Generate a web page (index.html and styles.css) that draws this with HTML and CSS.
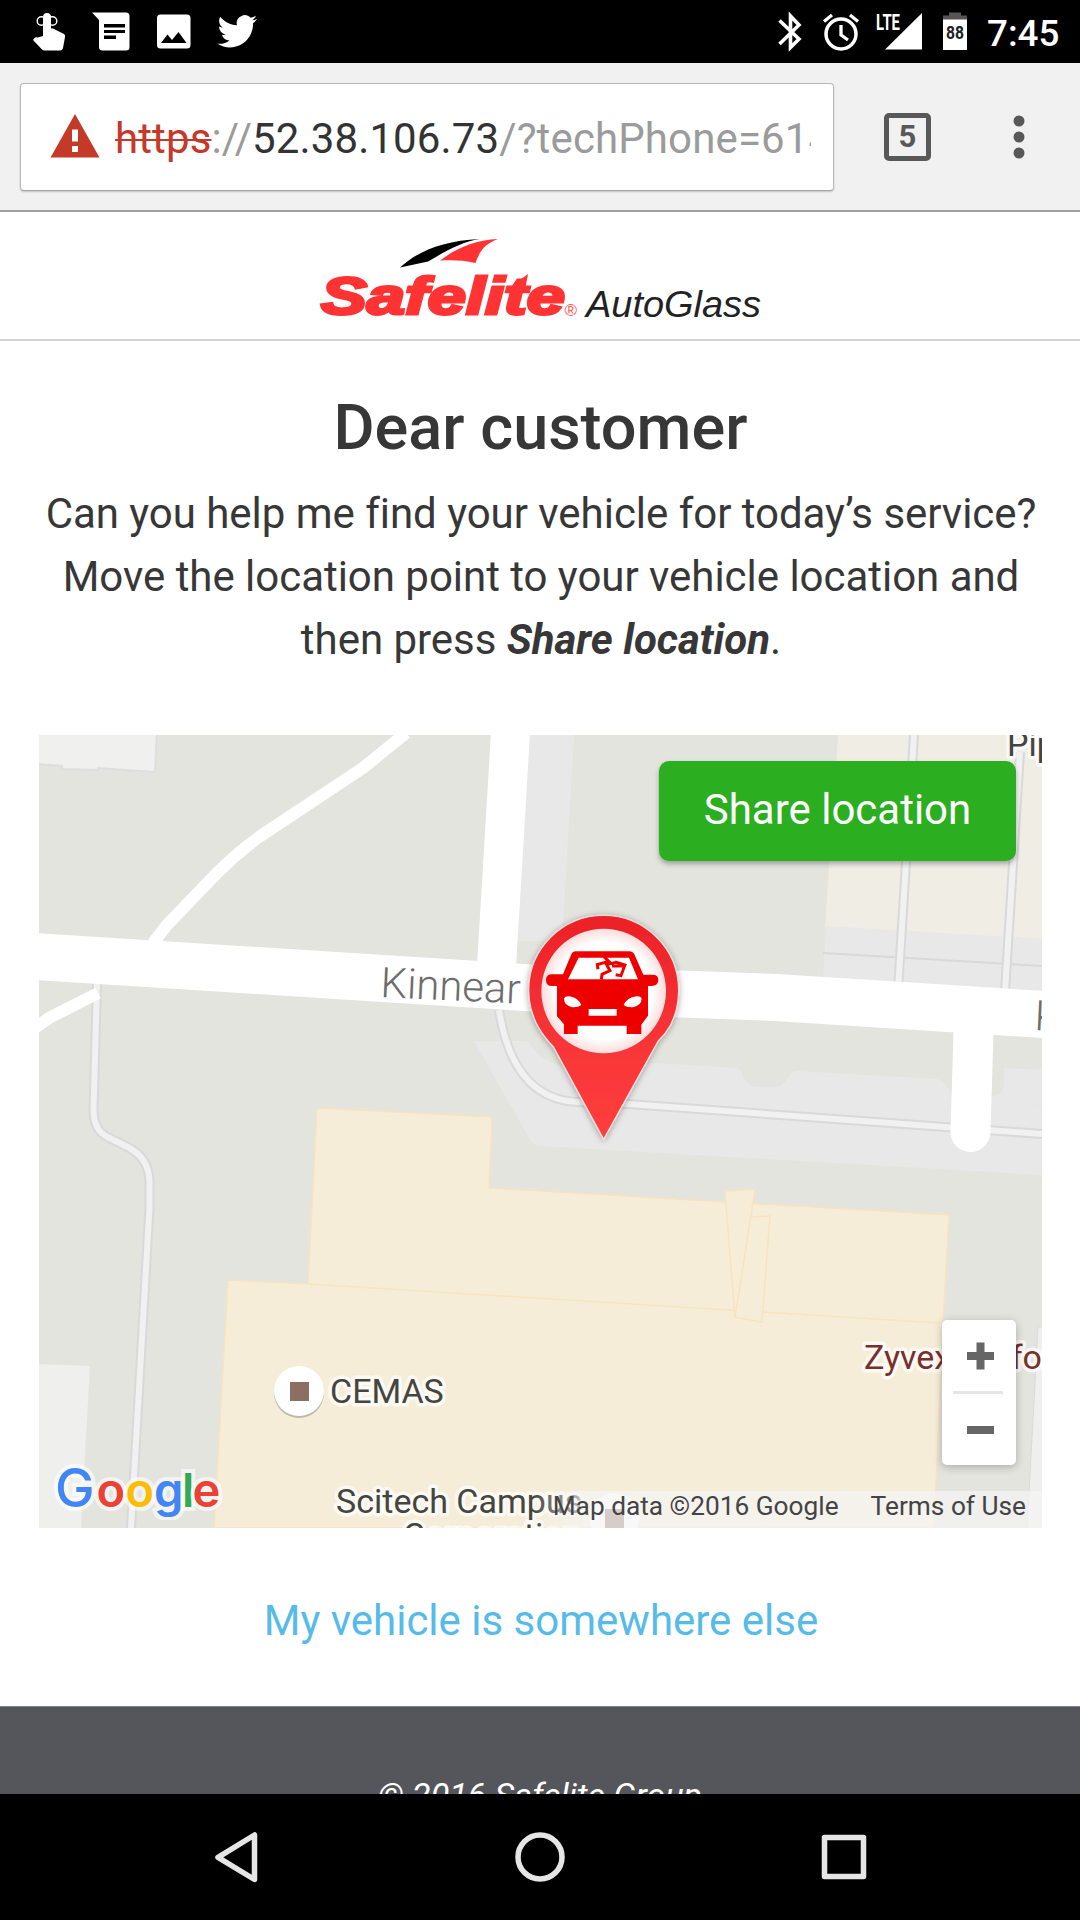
FILE: index.html
```html
<!DOCTYPE html>
<html lang="en">
<head>
<meta charset="utf-8">
<title>Safelite AutoGlass</title>
<link rel="stylesheet" href="styles.css">
</head>
<body>
<div class="phone">
  <div class="status-bar">
    <svg class="status-left" width="260" height="63" viewBox="0 0 260 63" fill="#fff">
      <path d="M43 36V17a4 4 0 0 1 8 0v11.500l2 0 11 5.500q1.500 1 1 3L63 48q-.5 2.500-3 2.500H44.500q-1.500 0-3-1.500L33 40l1.500-2q1-1 3-.5z"/>
      <circle cx="41.500" cy="21" r="4.300" fill="none" stroke="#fff" stroke-width="1.400"/>
      <circle cx="52.500" cy="21" r="4.300" fill="none" stroke="#fff" stroke-width="1.400"/>
      <path fill-rule="evenodd" d="M92 12.500h34q3.500 0 3.500 3.500v31q0 3.500-3.500 3.500h-23.500q-3.500 0-3.500-3.500V20zM104 24v3.500h21V24zm0 6v3h21v-3zm0 5.500v3.500h12v-3.500z"/>
      <path fill-rule="evenodd" d="M160.500 14.500h26.500q3.500 0 3.500 3.500v27q0 3.500-3.500 3.500h-26.500q-3.500 0-3.500-3.500V18q0-3.500 3.500-3.500zM161 43h25.500L178.500 32l-6.500 8-4.500-5.500z"/>
      <path transform="translate(217.500 11.500) scale(1.650)" d="M23.950 4.570a10 10 0 0 1-2.820.780 4.960 4.960 0 0 0 2.160-2.720c-.95.550-2 .950-3.130 1.180a4.920 4.920 0 0 0-8.380 4.480C7.690 8.100 4.070 6.130 1.640 3.160a4.820 4.820 0 0 0-.67 2.480c0 1.700.87 3.210 2.190 4.100a4.900 4.900 0 0 1-2.230-.62v.06a4.920 4.920 0 0 0 3.950 4.830 5 5 0 0 1-2.210.080 4.940 4.940 0 0 0 4.600 3.420A9.870 9.870 0 0 1 0 19.540a13.990 13.990 0 0 0 7.550 2.210c9.050 0 14-7.500 14-13.980 0-.21 0-.42-.02-.63a9.940 9.940 0 0 0 2.460-2.550z"/>
    </svg>
    <svg class="status-right" width="200" height="63" viewBox="775 0 200 63" fill="#fff">
      <path d="M779.500 20.500L799 39 790.500 47.500V16L799 25 779.500 44" fill="none" stroke="#fff" stroke-width="3.600"/>
      <circle cx="841" cy="34" r="15" fill="none" stroke="#fff" stroke-width="3.500"/>
      <path d="M841 25v10l7 5M824 21.500l8-6.500M858 21.500l-8-6.500" fill="none" stroke="#fff" stroke-width="3.300"/>
      <text class="lte" x="876" y="29.500" textLength="24" lengthAdjust="spacingAndGlyphs">LTE</text>
      <path d="M922 13v36.500H885z"/>
      <path fill="#555" d="M949 12.500h12v3h6V20h-24v-4.500h6z"/>
      <path d="M943 19.500h24V50h-24z"/>
      <text class="charge" x="946" y="38.500" textLength="18" lengthAdjust="spacingAndGlyphs">88</text>
    </svg>
    <span class="clock">7:45</span>
  </div>

  <div class="toolbar">
    <div class="omnibox">
      <svg width="50" height="44" viewBox="0 0 50 44"><path fill="#c53929" d="M25 0l24.500 43.500H.500z"/><path fill="#fff" d="M22 15.500h6v12h-6zM22 32h6v6h-6z"/></svg>
      <div class="url"><span class="scheme">https</span>://<span class="host">52.38.106.73</span>/?techPhone=614</div>
    </div>
    <div class="tabs">5</div>
    <svg class="menu" width="14" height="48" viewBox="0 0 14 48" fill="#585858"><circle cx="7" cy="8" r="5.500"/><circle cx="7" cy="24" r="5.500"/><circle cx="7" cy="40" r="5.500"/></svg>
  </div>

  <div class="page">
    <header class="brand">
      <svg width="450" height="100" viewBox="315 232 450 100">
        <path d="M400 267.500c16-15 42-27 80-28.500-19 3-34 12-52 22.500z"/>
        <path fill="#f33" d="M440 260.500c16-12 34-20.500 58-21.500-13 5-18 11-22.500 24-12-3-24-3-35.500-2.500z"/>
        <text class="wordmark" x="321" y="314" textLength="244" lengthAdjust="spacingAndGlyphs">Safelite</text>
        <path fill="#f33" d="M509 288l19-14-3 16z"/>
        <text class="reg" x="564.500" y="316">®</text>
        <text class="autoglass" x="586" y="317" textLength="175" lengthAdjust="spacingAndGlyphs">AutoGlass</text>
      </svg>
    </header>

    <main>
      <h1>Dear customer</h1>
      <p class="lead">Can you help me find your vehicle for today’s service?<br>Move the location point to your vehicle location and<br>then press <b><i>Share location</i></b>.</p>

      <div class="map">
        <svg class="tiles" width="1003" height="793" viewBox="39 735 1003 793">
          <defs>
            <linearGradient id="pin" x1="0" y1="0" x2="0" y2="1"><stop offset="0" stop-color="#eb2126"/><stop offset=".6" stop-color="#f83638"/><stop offset="1" stop-color="#ff3d3d"/></linearGradient>
            <radialGradient id="glow"><stop offset=".78" stop-color="#fff"/><stop offset="1" stop-color="#fcdcdc"/></radialGradient>
            <filter id="soft" x="-20%" y="-20%" width="140%" height="140%"><feDropShadow dx="0" dy="3" stdDeviation="9" flood-opacity=".35"/></filter>
          </defs>
          <rect x="39" y="735" width="1003" height="793" fill="#e3e4de"/>
          <!-- lots and blocks -->
          <path fill="#f0f0ef" stroke="#dedede" stroke-width="2" d="M36 733H157l-2 39-57-4v2l-36-1v-3l-26-2z"/>
          <path fill="#e8e8e9" d="M530 735h44l-12 206h-46z"/>
          <path fill="#efede4" d="M838 735h204v204l-217-12z"/>
          <path fill="#e8e8e8" d="M826 926l216 13v55l-219-14z"/>
          <path stroke="#d9d9d9" stroke-width="2" d="M823 953l219 13"/>
          <path fill="#e8e8e8" d="M474 1041h54q12 22 40 26l88-4 81 5q4 2 6 8 4 10 12 11h22q6-1 10-8 5-8 10-8l140 8q7 1 10 8 4 8 11 9h33q12 0 13-12v-16l38 2v35l-502 33z"/>
          <path fill="#e8e8e8" d="M474 1041l54 0q20 45 100 52l414 13v69l-502-29q-7-1-11-8z"/>
          <path fill="#efefee" d="M39 1364l51 2-9 162H39z"/>
          <path fill="#efefee" stroke="#dadada" d="M1038 1327h6v203h-17z"/>
          <!-- paths -->
          <g fill="none" stroke="#d9d9d9" stroke-width="10">
            <path d="M97 984L93.500 1110q0 20 14 27l22 11q20 11 20 35v25L131 1528"/>
            <path d="M499 1010q14 89 78 92l51 2 414 30"/>
            <path d="M914 735l-16 255M1020 752l-15 240"/>
          </g>
          <g fill="none" stroke="#f1f1f1" stroke-width="6">
            <path d="M97 984L93.500 1110q0 20 14 27l22 11q20 11 20 35v25L131 1528"/>
            <path d="M499 1010q14 89 78 92l51 2 414 30"/>
            <path d="M914 735l-16 255M1020 752l-15 240"/>
          </g>
          <!-- roads -->
          <g fill="none" stroke="#fff">
            <path stroke-width="12" d="M406 733L363 768 259 837q-22 16-42 36l-50 52-14 18M98 993l-49 25-13 9"/>
            <path stroke-width="39" d="M510.500 733l-15 250"/>
            <path stroke-width="47" d="M36 956.500l300 19 220 14 220 8 268 17"/>
            <path stroke-width="40" stroke-linecap="round" d="M974 1015l-3.500 117"/>
          </g>
          <!-- buildings -->
          <g fill="#f6edd9" stroke="#f5e4bf" stroke-width="1.500">
            <path d="M317 1108l175 9-3 71 460 27-6 108-9 205H214l14-248 80 4z"/>
            <path d="M308 1284l632 39"/>
            <path d="M725 1191l30-2-20 129zM751 1217l19-1-8 106-27-5"/>
          </g>
          <!-- labels -->
          <g class="labels">
            <text class="street" transform="translate(380 997) rotate(2.700)" textLength="140">Kinnear</text>
            <text class="street" transform="translate(1034 1030) rotate(2.700)">K</text>
            <text x="1007" y="756">Pip</text>
            <text x="330" y="1403">CEMAS</text>
            <text x="336" y="1513">Scitech Campus</text>
            <text x="403" y="1547">Corporation</text>
            <text class="shop" x="864" y="1368.500">Zyvex Performance</text>
          </g>
          <circle cx="299" cy="1393" r="25" fill="#bbb8ae"/><circle cx="299" cy="1391" r="25" fill="#fff"/><path fill="#8d6e63" d="M290 1382h19v19h-19z"/>
          <circle cx="614.500" cy="1518" r="25" fill="#fff"/><path fill="#8d6e63" d="M605 1509h19v19h-19z"/>
          <!-- vehicle pin -->
          <g transform="translate(500 890) scale(.33333)">
            <path filter="url(#soft)" fill="url(#pin)" stroke="#f3dcdc" stroke-width="4" d="M311 748L160 470Q86 395 86 301a225 225 0 0 1 450 0q0 94-62 153z"/>
            <circle cx="311" cy="303" r="187" fill="url(#glow)"/>
            <path fill="#e00" fill-rule="evenodd" d="M226 184H388q10 0 15 9l27 61h27q18 0 18 16t-20 18h-11v89l-20 27v28h-44v-25H233v25h-41v-29l-21-24v-91h-15q-18 0-18-18t20-17h31l25-60q4-9 12-9zM236 203l-32 65H414l-27-65z"/>
            <path fill="none" stroke="#e00" stroke-width="9" d="M312 200l14 14-34 10 2 14M304 268l2-15 24-11-10-18 27-7M336 228l38-1-11 30-16-3M345 216l34 10"/>
            <path fill="#fff" d="M192 325q3-7 16-6 26 4 36 26-9 8-27 7-25-5-25-27zM425 325q-3-7-16-6-28 4-38 26 9 8 27 7 27-5 27-27zM266 357h84v20h-84z"/>
          </g>
        </svg>
        <svg class="google" width="180" height="60" viewBox="50 1460 180 60">
          <text y="1507"><tspan class="cap" x="55" fill="#4285f4">G</tspan><tspan x="96.500" fill="#ea4335">o</tspan><tspan x="125.500" fill="#fbbc05">o</tspan><tspan x="154" fill="#4285f4">g</tspan><tspan x="182" fill="#34a853">l</tspan><tspan x="192.500" fill="#ea4335">e</tspan></text>
        </svg>
        <button class="share">Share location</button>
        <div class="zoom">
          <svg width="74" height="72" viewBox="0 0 74 72"><path fill="#666" d="M34.500 22.500h8V32h9.500v8h-9.500v9.500h-8V40H25v-8h9.500z"/></svg>
          <span class="divider"></span>
          <svg width="74" height="72" viewBox="0 0 74 72"><path fill="#666" d="M25 32h27v8H25z"/></svg>
        </div>
        <div class="credits"><span>Map data ©2016 Google</span><span>Terms of Use</span></div>
      </div>

      <a class="elsewhere">My vehicle is somewhere else</a>
    </main>

    <footer>© 2016 Safelite Group</footer>
  </div>

  <nav class="nav-bar">
    <svg width="1080" height="126" viewBox="0 1794 1080 126" fill="none" stroke="#e6e6e6" stroke-width="5.500" stroke-linejoin="round">
      <path d="M254.500 1835v44.500L218 1857.300z"/>
      <circle cx="540" cy="1857" r="22"/>
      <rect x="824.500" y="1837.500" width="39" height="39"/>
    </svg>
  </nav>
</div>
</body>
</html>
```
FILE: styles.css
```css
* { box-sizing: border-box; }

body {
  margin: 0;
  font-family: Roboto, "Liberation Sans", sans-serif;
  color: #373737;
  background: #fff;
}

svg { display: block; flex: none; }

.phone {
  width: 1080px;
  height: 1920px;
  display: flex;
  flex-direction: column;
  overflow: hidden;
}

/* Android status bar */
.status-bar {
  flex: none;
  height: 63px;
  background: #000;
  display: flex;
  align-items: center;
}
.status-right { margin-left: 515px; }
.clock {
  margin-left: 12px;
  padding-top: 3px;
  color: #fff;
  font-size: 36.75px;
  font-weight: 500;
}
.lte { font: 700 22.500px Roboto, sans-serif; }
.charge { font: 700 19px Roboto, sans-serif; fill: #222; }

/* Browser toolbar */
.toolbar {
  flex: none;
  height: 149px;
  padding: 0 54px 0 20px;
  background: #f1f1f1;
  border-bottom: 2px solid #a0a0a2;
  display: flex;
  align-items: center;
}
.omnibox {
  width: 814px;
  height: 108px;
  padding: 0 22px 0 29px;
  background: #fff;
  border: 1px solid #b8b8b8;
  border-bottom-color: #a3a3a3;
  border-radius: 4px;
  box-shadow: 0 1px 2px rgba(0, 0, 0, .2);
  display: flex;
  align-items: center;
  gap: 15px;
}
.omnibox svg { margin-top: -2px; }
.url {
  flex: 1;
  overflow: hidden;
  white-space: nowrap;
  font-size: 42px;
  letter-spacing: .12px;
  line-height: 56px;
  padding-top: 4px;
  color: #9b9b9b;
}
.scheme { color: #c53929; text-decoration: line-through; text-decoration-thickness: 2px; }
.host { color: #333; }
.tabs {
  width: 47px;
  height: 48px;
  margin-left: 50px;
  border: 5px solid #585858;
  border-radius: 5px;
  color: #585858;
  font-size: 31px;
  font-weight: 700;
  line-height: 37px;
  text-align: center;
}
.menu { margin-left: auto; }

/* Web page */
.page {
  flex: 1;
  min-height: 0;
  overflow: hidden;
  display: flex;
  flex-direction: column;
}
.brand {
  flex: none;
  height: 129px;
  padding-top: 20px;
  border-bottom: 2px solid #d1d3d4;
  display: flex;
  justify-content: center;
}
.wordmark { font: italic 700 52px "Liberation Sans", sans-serif; fill: #f33; stroke: #f33; stroke-width: 3px; }
.reg { font: 17px "Liberation Sans", sans-serif; fill: #f55; }
.autoglass { font: italic 37px "Liberation Sans", sans-serif; fill: #222; }

main {
  flex: none;
  height: 1365px;
  padding: 50px 38px 0 39px;
  display: flex;
  flex-direction: column;
}
h1 {
  margin: 0;
  font-size: 63px;
  font-weight: 500;
  line-height: 74px;
  text-align: center;
}
.lead {
  margin: 17px -21px 0 -20px;
  font-size: 42px;
  letter-spacing: -.03px;
  line-height: 63px;
  text-align: center;
}
.map {
  position: relative;
  flex: none;
  margin-top: 64px;
  width: 1003px;
  height: 793px;
  overflow: hidden;
}
.labels {
  font-size: 34px;
  fill: #45453f;
  paint-order: stroke;
  stroke: rgba(255, 255, 255, .7);
  stroke-width: 7px;
  stroke-linejoin: round;
}
.street { font-size: 42px; font-weight: 300; fill: #6d6d6d; stroke: none; }
.shop { fill: #77302c; }
.google { position: absolute; left: 11px; top: 725px; }
.google text {
  font: 600 47px Inter, sans-serif;
  paint-order: stroke;
  stroke: rgba(255, 255, 255, .6);
  stroke-width: 8px;
}
.google .cap { font-size: 53px; font-weight: 500; }
.share {
  position: absolute;
  left: 620px;
  top: 26px;
  width: 357px;
  height: 100px;
  padding: 0 0 4px;
  border: 0;
  border-radius: 10px;
  background: #2bae1f;
  box-shadow: 0 3px 5px rgba(0, 0, 0, .3);
  color: #fff;
  font: 42px Roboto, sans-serif;
}
.zoom {
  position: absolute;
  left: 903px;
  top: 585px;
  width: 74px;
  height: 145px;
  border-radius: 5px;
  background: #fff;
  box-shadow: 0 2px 8px rgba(0, 0, 0, .25);
}
.divider { display: block; width: 50px; height: 3px; margin: -1px 0 0 11px; background: #e6e6e6; }
.credits {
  position: absolute;
  right: 0;
  bottom: 0;
  height: 37px;
  padding: 0 16px 0 20px;
  display: flex;
  gap: 32px;
  background: linear-gradient(to right, rgba(245, 245, 245, 0), rgba(245, 245, 245, .7) 50px);
  color: #444;
  font-size: 26.25px;
  line-height: 31px;
}
.elsewhere {
  margin: 61px -1px 0 0;
  color: #56bbe9;
  font-size: 42px;
  line-height: 63px;
  text-align: center;
}
footer {
  flex: none;
  height: 200px;
  padding-top: 66px;
  background: #55565b;
  border-top: 1px solid #808285;
  color: #fff;
  font-size: 34px;
  font-style: italic;
  line-height: 44px;
  text-align: center;
}

.nav-bar { flex: none; height: 126px; background: #000; }
```
